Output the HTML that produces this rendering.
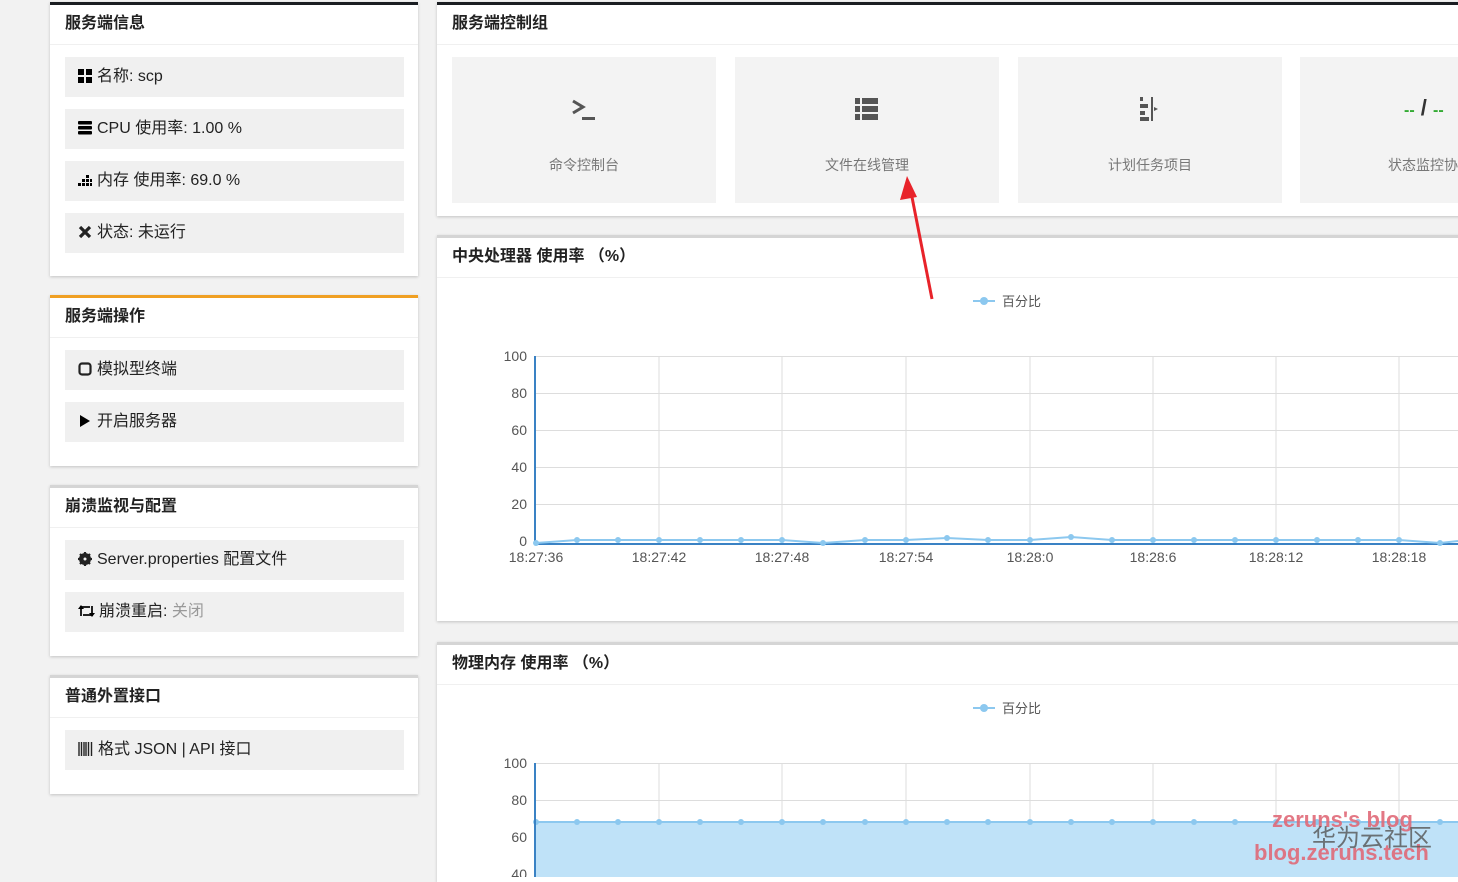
<!DOCTYPE html>
<html><head><meta charset="utf-8"><style>
*{margin:0;padding:0;box-sizing:border-box}
body{width:1458px;height:877px;background:#f2f2f2;position:relative;overflow:hidden;font-family:"Liberation Sans","Noto Sans CJK SC",sans-serif;color:#222}
.p{position:absolute;background:#fff;box-shadow:0 1px 3px rgba(0,0,0,.2)}
.h{height:40px;border-bottom:1px solid #f0f0f0;padding:6px 15px 0;font-size:16px;font-weight:bold;color:#222;line-height:26px}
.it{position:absolute;left:15px;width:339px;height:40px;background:#f0f0f0;font-size:16px;line-height:40px;padding-left:13px;color:#222}
.it svg{vertical-align:-2px;margin-right:4px}
.c{position:absolute;top:52px;width:264px;height:146px;background:#f3f3f3;text-align:center;color:#777;font-size:14px}
.c .l{position:absolute;top:98px;left:0;right:0}
.c svg{position:absolute;top:40px;left:119px}
</style></head><body>
<div class="p" style="left:50px;top:2px;width:368px;height:274px;border-top:3px solid #1a1d22">
<div class="h">服务端信息</div>
<div class="it" style="top:52px"><svg width="15" height="14"><rect x="0" y="0" width="6" height="6"/><rect x="8" y="0" width="6" height="6"/><rect x="0" y="8" width="6" height="6"/><rect x="8" y="8" width="6" height="6"/></svg>名称: scp</div>
<div class="it" style="top:104px"><svg width="15" height="14"><rect x="0" y="0" width="14" height="3.5" rx="1"/><rect x="0" y="5" width="14" height="3.5" rx="1"/><rect x="0" y="10" width="14" height="3.5" rx="1"/></svg>CPU 使用率: 1.00 %</div>
<div class="it" style="top:156px"><svg width="15" height="14"><rect x="0" y="10" width="3" height="3"/><rect x="4" y="10" width="3" height="3"/><rect x="8" y="10" width="3" height="3"/><rect x="4" y="6" width="3" height="3"/><rect x="8" y="6" width="3" height="3"/><rect x="8" y="2" width="3" height="3"/><rect x="12" y="6" width="2" height="3"/><rect x="12" y="10" width="2" height="3"/></svg>内存 使用率: 69.0 %</div>
<div class="it" style="top:208px"><svg width="15" height="14"><path d="M2 2 L12 12 M12 2 L2 12" stroke="#222" stroke-width="3.2"/></svg>状态: 未运行</div>
</div>
<div class="p" style="left:50px;top:295px;width:368px;height:171px;border-top:3px solid #f0a023">
<div class="h">服务端操作</div>
<div class="it" style="top:52px"><svg width="15" height="14"><rect x="1.5" y="1.5" width="11" height="11" rx="2.5" fill="none" stroke="#222" stroke-width="2.2"/></svg>模拟型终端</div>
<div class="it" style="top:104px"><svg width="15" height="14"><path d="M2 1 L12 7 L2 13Z"/></svg>开启服务器</div>
</div>
<div class="p" style="left:50px;top:485px;width:368px;height:171px;border-top:3px solid #d5d5d5">
<div class="h">崩溃监视与配置</div>
<div class="it" style="top:52px"><svg width="15" height="14"><circle cx="7" cy="7" r="4.5" fill="none" stroke="#222" stroke-width="3"/><path d="M7 0V14M0 7H14M2 2L12 12M12 2L2 12" stroke="#222" stroke-width="2.2"/><circle cx="7" cy="7" r="1.5" fill="#f0f0f0"/></svg>Server.properties 配置文件</div>
<div class="it" style="top:104px"><svg width="17" height="14"><path d="M3 12V3H12M14 2V11H5" fill="none" stroke="#222" stroke-width="2"/><path d="M0 5L3 1L6 5Z M11 9L14 13L17 9Z"/></svg>崩溃重启: <span style="color:#999">关闭</span></div>
</div>
<div class="p" style="left:50px;top:675px;width:368px;height:119px;border-top:3px solid #d5d5d5">
<div class="h">普通外置接口</div>
<div class="it" style="top:52px"><svg width="16" height="14"><path d="M1 0V14M3.5 0V14M6 0V14M8 0V14M10.5 0V14M13.5 0V14" stroke="#222" stroke-width="1.4"/></svg>格式 JSON | API 接口</div>
</div>

<div class="p" style="left:437px;top:2px;width:1030px;height:214px;border-top:3px solid #1a1d22">
<div class="h">服务端控制组</div>
<div class="c" style="left:15px"><svg width="26" height="26"><path d="M2 4 L12 10 L2 16" fill="none" stroke="#555" stroke-width="3"/><rect x="11" y="20" width="13" height="3" fill="#555"/></svg><div class="l">命令控制台</div></div>
<div class="c" style="left:298px"><svg width="26" height="26"><g fill="#555"><rect x="1" y="1" width="5" height="6"/><rect x="8" y="1" width="16" height="6"/><rect x="1" y="9" width="5" height="6"/><rect x="8" y="9" width="16" height="6"/><rect x="1" y="17" width="5" height="6"/><rect x="8" y="17" width="16" height="6"/></g></svg><div class="l">文件在线管理</div></div>
<div class="c" style="left:581px"><svg width="26" height="26"><g fill="#555"><rect x="3" y="0" width="3" height="4"/><rect x="3" y="7" width="8" height="4"/><rect x="3" y="14" width="5" height="4"/><rect x="3" y="20" width="9" height="4"/><rect x="14" y="0" width="2" height="24"/><path d="M17 10 L21 12 L17 14Z"/></g></svg><div class="l">计划任务项目</div></div>
<div class="c" style="left:863px"><div style="position:absolute;top:38px;left:104px;font-size:22px;font-weight:bold;color:#333"><span style="color:#3a3;font-size:16px">--</span> / <span style="color:#3a3;font-size:16px">--</span></div><div class="l" style="left:88px;text-align:left;white-space:nowrap">状态监控协议</div></div>
</div>
<div class="p" style="left:437px;top:235px;width:1030px;height:386px;border-top:3px solid #d5d5d5">
<div class="h">中央处理器 使用率 （%）</div>
</div>
<div class="p" style="left:437px;top:642px;width:1030px;height:240px;border-top:3px solid #d5d5d5">
<div class="h">物理内存 使用率 （%）</div>
</div>

<svg style="position:absolute;left:0;top:0" width="1458" height="877" font-family="Liberation Sans, sans-serif" font-size="14">
<g fill="#555" font-size="13" font-family="Liberation Sans, Noto Sans CJK SC, sans-serif">
<line x1="973" y1="301" x2="995" y2="301" stroke="#8cc8ef" stroke-width="2"/><circle cx="984" cy="301" r="4" fill="#8cc8ef"/><text x="1002" y="306">百分比</text>
<line x1="973" y1="708" x2="995" y2="708" stroke="#8cc8ef" stroke-width="2"/><circle cx="984" cy="708" r="4" fill="#8cc8ef"/><text x="1002" y="713">百分比</text>
</g>
<g stroke="#ddd" stroke-width="1">
<line x1="535" y1="356.5" x2="1458" y2="356.5"/><line x1="535" y1="393.5" x2="1458" y2="393.5"/><line x1="535" y1="430.5" x2="1458" y2="430.5"/><line x1="535" y1="467.5" x2="1458" y2="467.5"/><line x1="535" y1="504.5" x2="1458" y2="504.5"/>
<line x1="659" y1="356" x2="659" y2="541"/><line x1="782" y1="356" x2="782" y2="541"/><line x1="906" y1="356" x2="906" y2="541"/><line x1="1030" y1="356" x2="1030" y2="541"/><line x1="1153" y1="356" x2="1153" y2="541"/><line x1="1276" y1="356" x2="1276" y2="541"/><line x1="1399" y1="356" x2="1399" y2="541"/>
<line x1="535" y1="763.5" x2="1458" y2="763.5"/><line x1="535" y1="800.5" x2="1458" y2="800.5"/><line x1="535" y1="837.5" x2="1458" y2="837.5"/><line x1="535" y1="874.5" x2="1458" y2="874.5"/>
<line x1="659" y1="763" x2="659" y2="877"/><line x1="782" y1="763" x2="782" y2="877"/><line x1="906" y1="763" x2="906" y2="877"/><line x1="1030" y1="763" x2="1030" y2="877"/><line x1="1153" y1="763" x2="1153" y2="877"/><line x1="1276" y1="763" x2="1276" y2="877"/><line x1="1399" y1="763" x2="1399" y2="877"/>
</g>
<rect x="536" y="822" width="922" height="55" fill="#bfe2f8"/>
<line x1="536" y1="822" x2="1458" y2="822" stroke="#8cc8ef" stroke-width="2"/>
<g fill="#8cc8ef">
<circle cx="536" cy="822" r="3"/><circle cx="577" cy="822" r="3"/><circle cx="618" cy="822" r="3"/><circle cx="659" cy="822" r="3"/><circle cx="700" cy="822" r="3"/><circle cx="741" cy="822" r="3"/><circle cx="782" cy="822" r="3"/><circle cx="823" cy="822" r="3"/><circle cx="865" cy="822" r="3"/><circle cx="906" cy="822" r="3"/><circle cx="947" cy="822" r="3"/><circle cx="988" cy="822" r="3"/><circle cx="1030" cy="822" r="3"/><circle cx="1071" cy="822" r="3"/><circle cx="1112" cy="822" r="3"/><circle cx="1153" cy="822" r="3"/><circle cx="1194" cy="822" r="3"/><circle cx="1235" cy="822" r="3"/><circle cx="1276" cy="822" r="3"/><circle cx="1317" cy="822" r="3"/><circle cx="1358" cy="822" r="3"/><circle cx="1399" cy="822" r="3"/><circle cx="1440" cy="822" r="3"/>
</g>
<line x1="535" y1="356" x2="535" y2="545" stroke="#3a82c4" stroke-width="2"/>
<line x1="535" y1="544" x2="1458" y2="544" stroke="#3a82c4" stroke-width="2"/>
<line x1="535" y1="763" x2="535" y2="877" stroke="#3a82c4" stroke-width="2"/>
<polyline fill="none" stroke="#8cc8ef" stroke-width="2" points="536,543 577,540 618,540 659,540 700,540 741,540 782,540 823,543 865,540 906,540 947,538 988,540 1030,540 1071,537 1112,540 1153,540 1194,540 1235,540 1276,540 1317,540 1358,540 1399,540 1440,543 1458,541"/>
<g fill="#8cc8ef">
<circle cx="536" cy="543" r="3"/><circle cx="577" cy="540" r="3"/><circle cx="618" cy="540" r="3"/><circle cx="659" cy="540" r="3"/><circle cx="700" cy="540" r="3"/><circle cx="741" cy="540" r="3"/><circle cx="782" cy="540" r="3"/><circle cx="823" cy="543" r="3"/><circle cx="865" cy="540" r="3"/><circle cx="906" cy="540" r="3"/><circle cx="947" cy="538" r="3"/><circle cx="988" cy="540" r="3"/><circle cx="1030" cy="540" r="3"/><circle cx="1071" cy="537" r="3"/><circle cx="1112" cy="540" r="3"/><circle cx="1153" cy="540" r="3"/><circle cx="1194" cy="540" r="3"/><circle cx="1235" cy="540" r="3"/><circle cx="1276" cy="540" r="3"/><circle cx="1317" cy="540" r="3"/><circle cx="1358" cy="540" r="3"/><circle cx="1399" cy="540" r="3"/><circle cx="1440" cy="543" r="3"/>
</g>
<g fill="#555" text-anchor="end">
<text x="527" y="361">100</text><text x="527" y="398">80</text><text x="527" y="435">60</text><text x="527" y="472">40</text><text x="527" y="509">20</text><text x="527" y="546">0</text>
<text x="527" y="768">100</text><text x="527" y="805">80</text><text x="527" y="842">60</text><text x="527" y="879">40</text>
</g>
<g fill="#555" text-anchor="middle">
<text x="536" y="562">18:27:36</text><text x="659" y="562">18:27:42</text><text x="782" y="562">18:27:48</text><text x="906" y="562">18:27:54</text><text x="1030" y="562">18:28:0</text><text x="1153" y="562">18:28:6</text><text x="1276" y="562">18:28:12</text><text x="1399" y="562">18:28:18</text>
</g>
<line x1="932" y1="299" x2="911" y2="192" stroke="#e8232a" stroke-width="3"/>
<polygon points="907,176 900,200 917,197" fill="#e8232a"/>
<g font-weight="bold" font-size="22" fill="#e06a78" opacity="0.9">
<text x="1272" y="827">zeruns's blog</text>
<text x="1254" y="860">blog.zeruns.tech</text>
</g>
<text x="1312" y="846" font-size="24" fill="#555" opacity="0.8" font-family="Noto Sans CJK SC, sans-serif">华为云社区</text>
</svg>
</body></html>
